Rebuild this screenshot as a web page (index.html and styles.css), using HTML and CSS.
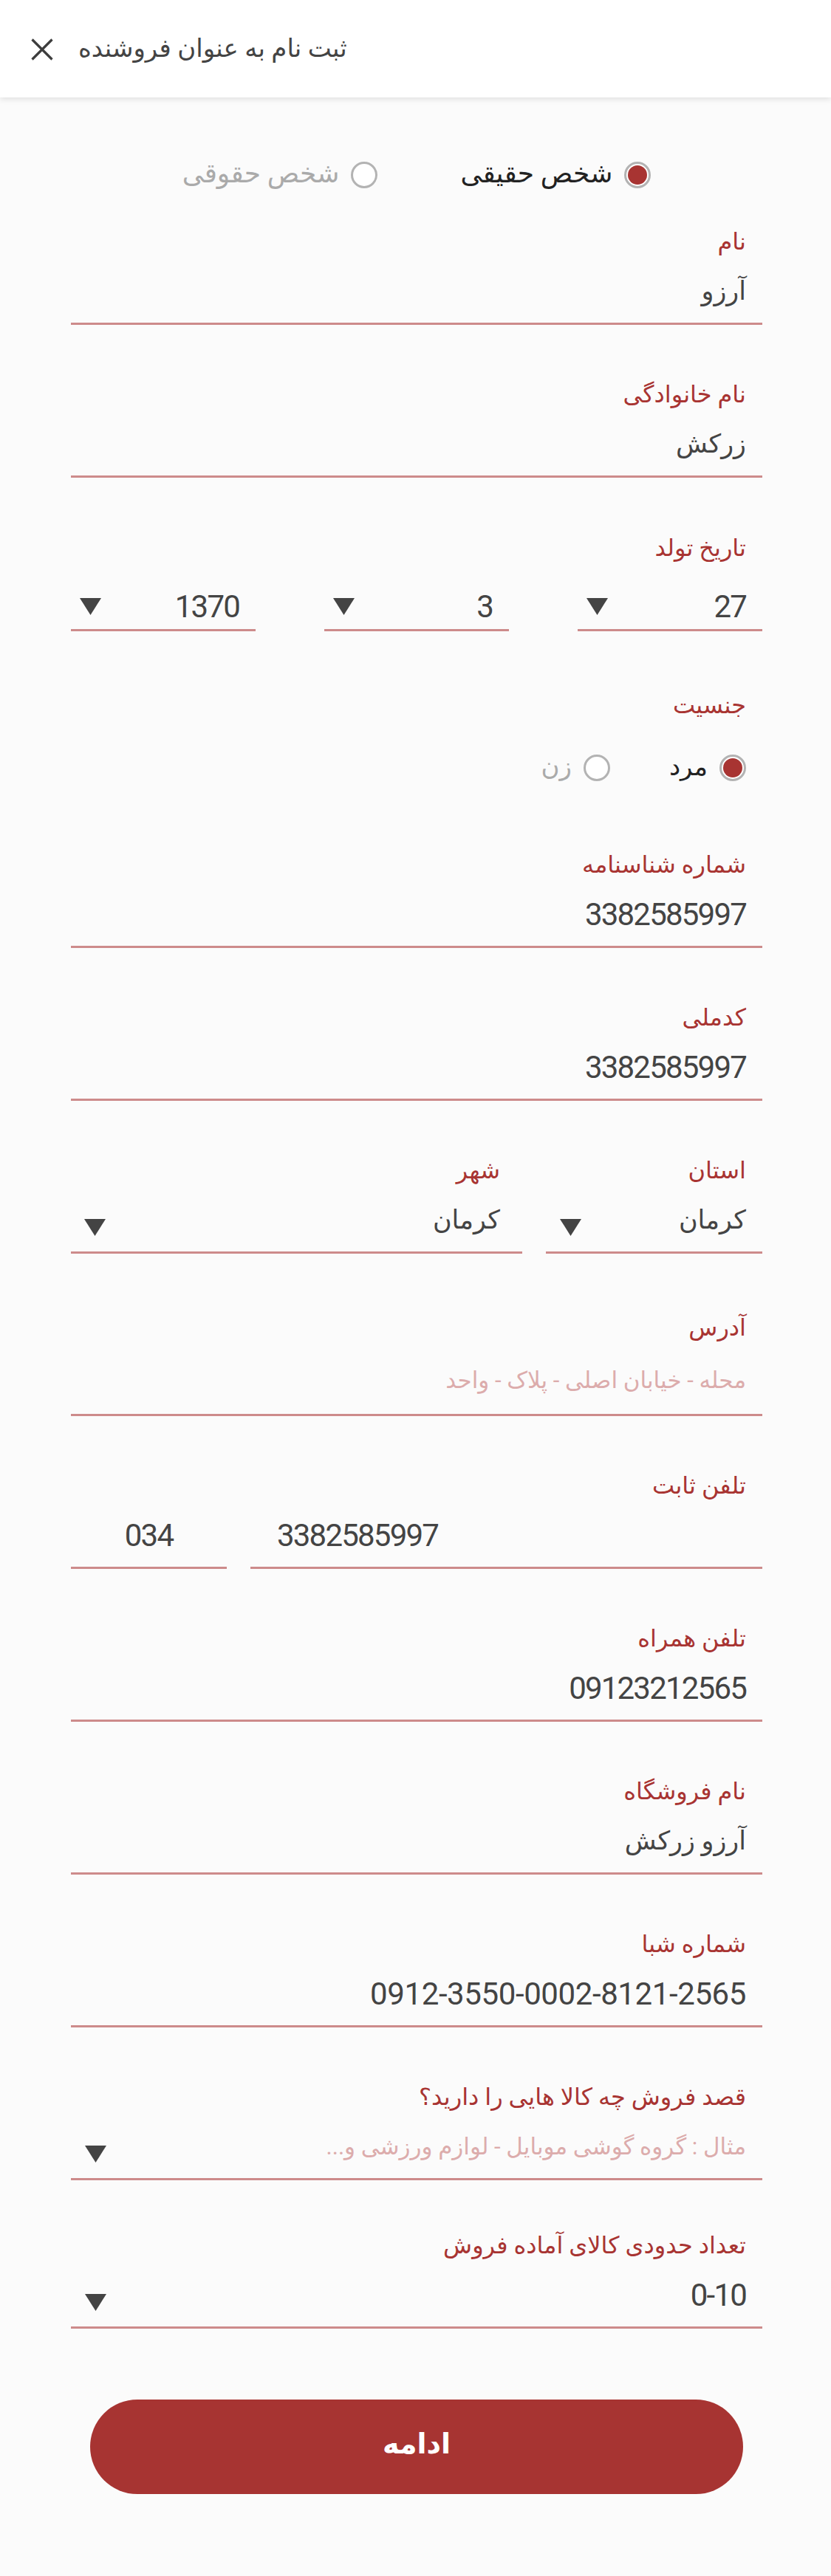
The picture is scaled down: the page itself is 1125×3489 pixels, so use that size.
FILE: index.html
```html
<!DOCTYPE html>
<html lang="fa" dir="rtl">
<head>
<meta charset="utf-8">
<title>ثبت نام به عنوان فروشنده</title>
<link rel="stylesheet" href="styles.css">
</head>
<body>
<header class="appbar">
  <svg class="close" width="30" height="30" viewBox="0 0 30 30"><path d="M1.5 1.5 L28.5 28.5 M28.5 1.5 L1.5 28.5" /></svg>
  <h1 class="title">ثبت نام به عنوان فروشنده</h1>
</header>
<main class="form">
  <div class="choice-row type-row">
    <div class="opt on"><span class="radio"></span><span class="opt-text">شخص حقیقی</span></div>
    <div class="opt off"><span class="radio"></span><span class="opt-text">شخص حقوقی</span></div>
  </div>

  <div class="field first">
    <div class="lbl">نام</div>
    <div class="val">آرزو</div>
  </div>

  <div class="field">
    <div class="lbl">نام خانوادگی</div>
    <div class="val">زرکش</div>
  </div>

  <div class="field date">
    <div class="lbl">تاریخ تولد</div>
    <div class="cols cols-3">
      <div class="val sel"><span class="sv ltr">27</span><svg class="tri" width="29" height="23" viewBox="0 0 29 23"><polygon points="0,0 29,0 14.5,23"/></svg></div>
      <div class="val sel"><span class="sv ltr">3</span><svg class="tri" width="29" height="23" viewBox="0 0 29 23"><polygon points="0,0 29,0 14.5,23"/></svg></div>
      <div class="val sel"><span class="sv ltr">1370</span><svg class="tri" width="29" height="23" viewBox="0 0 29 23"><polygon points="0,0 29,0 14.5,23"/></svg></div>
    </div>
  </div>

  <div class="gender">
    <div class="lbl">جنسیت</div>
    <div class="choice-row gender-row">
      <div class="opt on"><span class="radio"></span><span class="opt-text">مرد</span></div>
      <div class="opt off"><span class="radio"></span><span class="opt-text">زن</span></div>
    </div>
  </div>

  <div class="field after-gender">
    <div class="lbl">شماره شناسنامه</div>
    <div class="val"><span class="ltr">3382585997</span></div>
  </div>

  <div class="field">
    <div class="lbl">کدملی</div>
    <div class="val"><span class="ltr">3382585997</span></div>
  </div>

  <div class="cols cols-place">
    <div class="field">
      <div class="lbl">استان</div>
      <div class="val sel"><span class="sv">کرمان</span><svg class="tri" width="29" height="23" viewBox="0 0 29 23"><polygon points="0,0 29,0 14.5,23"/></svg></div>
    </div>
    <div class="field city">
      <div class="lbl">شهر</div>
      <div class="val sel"><span class="sv">کرمان</span><svg class="tri" width="29" height="23" viewBox="0 0 29 23"><polygon points="0,0 29,0 14.5,23"/></svg></div>
    </div>
  </div>

  <div class="field address">
    <div class="lbl">آدرس</div>
    <div class="val ph">محله - خیابان اصلی - پلاک - واحد</div>
  </div>

  <div class="field">
    <div class="lbl">تلفن ثابت</div>
    <div class="cols cols-phone">
      <div class="val num"><span class="ltr">3382585997</span></div>
      <div class="val code"><span class="ltr">034</span></div>
    </div>
  </div>

  <div class="field">
    <div class="lbl">تلفن همراه</div>
    <div class="val"><span class="ltr">09123212565</span></div>
  </div>

  <div class="field">
    <div class="lbl">نام فروشگاه</div>
    <div class="val">آرزو زرکش</div>
  </div>

  <div class="field">
    <div class="lbl">شماره شبا</div>
    <div class="val"><span class="ltr sheba">0912-3550-0002-8121-2565</span></div>
  </div>

  <div class="field">
    <div class="lbl">قصد فروش چه کالا هایی را دارید؟</div>
    <div class="val sel"><span class="sv ph">مثال : گروه گوشی موبایل - لوازم ورزشی و...</span><svg class="tri" width="29" height="23" viewBox="0 0 29 23"><polygon points="0,0 29,0 14.5,23"/></svg></div>
  </div>

  <div class="field count">
    <div class="lbl">تعداد حدودی کالای آماده فروش</div>
    <div class="val sel"><span class="sv ltr">0-10</span><svg class="tri" width="29" height="23" viewBox="0 0 29 23"><polygon points="0,0 29,0 14.5,23"/></svg></div>
  </div>

  <button class="submit" type="button">ادامه</button>
</main>
</body>
</html>
```

FILE: styles.css
```css
* { box-sizing: border-box; }

html, body {
  margin: 0;
  padding: 0;
}

body {
  min-height: 3489px;
  background: #fbfbfb;
  font-family: Roboto, "DejaVu Sans", sans-serif;
  color: #444;
}

.appbar {
  direction: ltr;
  height: 132px;
  background: #fff;
  box-shadow: 0 2px 8px rgba(0, 0, 0, 0.12);
  display: flex;
  align-items: center;
  padding-left: 42px;
  gap: 34px;
}

.close {
  display: block;
  margin-top: 2px;
}

.close path {
  stroke: #3d3d3d;
  stroke-width: 3.2;
  fill: none;
}

.title {
  margin: 0;
  font-size: 34px;
  font-weight: normal;
  color: #444;
  direction: rtl;
  line-height: 44px;
  margin-top: -2px;
}

.form {
  padding: 0 93px 0 96px;
}

.choice-row {
  display: flex;
  align-items: center;
  height: 36px;
}

.type-row {
  margin-top: 87px;
  justify-content: center;
  gap: 112px;
}

.gender-row {
  margin-top: 45px;
  padding-right: 22px;
  gap: 80px;
}

.opt {
  display: flex;
  align-items: center;
  gap: 16px;
  font-size: 36px;
}

.opt-text {
  line-height: 44px;
  margin-top: -4px;
}

.opt.on { color: #222; }
.opt.off { color: #aaa; }

.radio {
  position: relative;
  width: 36px;
  height: 36px;
  border: 3px solid #b3b3b3;
  border-radius: 50%;
  background: #fff;
  flex: none;
}

.opt.on .radio::after {
  content: "";
  position: absolute;
  inset: 2px;
  border-radius: 50%;
  background: #a83432;
}

.gender-row .opt { font-size: 34px; }

.field {
  margin-top: 72px;
}

.field.first { margin-top: 50px; }
.field.date { margin-top: 73px; }
.field.after-gender { margin-top: 91px; }
.field.address { margin-top: 78px; }
.field.count { margin-top: 66px; }

.gender { margin-top: 78px; }

.lbl {
  font-size: 32px;
  line-height: 44px;
  height: 44px;
  color: #a83432;
  padding-right: 22px;
  white-space: nowrap;
}

.val {
  margin-top: 16px;
  height: 75px;
  line-height: 60px;
  padding: 0 22px 12px 0;
  border-bottom: 3px solid #cd8b8b;
  font-size: 35px;
  color: #444;
  white-space: nowrap;
}

.ltr {
  direction: ltr;
  unicode-bidi: isolate;
  font-size: 42px;
  letter-spacing: -1.8px;
}

.ltr.sheba {
  letter-spacing: -0.4px;
}

.ph {
  color: #dcacac;
  font-size: 31px;
}

.field.address .val {
  margin-top: 20px;
  height: 78px;
  padding-bottom: 15px;
}

.sel {
  display: flex;
  justify-content: space-between;
  align-items: flex-end;
}

.sel .sv {
  line-height: 60px;
  align-self: flex-start;
}

.sel .tri {
  display: block;
  margin: 0 0 9px 0;
}

.tri polygon { fill: #444; }

.cols {
  display: grid;
}

.cols .field { margin-top: 72px; }

.cols-3 {
  grid-template-columns: 1fr 1fr 1fr;
  column-gap: 93px;
  margin-top: 28px;
}

.cols-3 .val {
  margin-top: 0;
  height: 63px;
  padding-bottom: 0;
  padding-left: 12px;
}

.cols-3 .val .tri { margin-bottom: 19px; }

.cols-place {
  grid-template-columns: 293px 1fr;
  column-gap: 32px;
}

.cols-place .val,
.field > .sel {
  padding-left: 19px;
}

.field.city .lbl,
.field.city .val { padding-right: 30px; }
.field.city .val { padding-left: 18px; }

.cols-phone {
  grid-template-columns: 1fr 211px;
  column-gap: 32px;
}

.cols-phone .val.num {
  text-align: left;
  padding: 0 0 12px 36px;
  direction: ltr;
}

.cols-phone .val.code {
  text-align: center;
  padding: 0 0 12px 0;
}

.submit {
  display: block;
  width: 884px;
  height: 128px;
  margin: 96px auto 0;
  border: none;
  border-radius: 64px;
  background: #a73432;
  color: #fff;
  font-family: "DejaVu Sans", sans-serif;
  font-size: 38px;
  font-weight: bold;
  padding: 0 0 8px 0;
}
```
